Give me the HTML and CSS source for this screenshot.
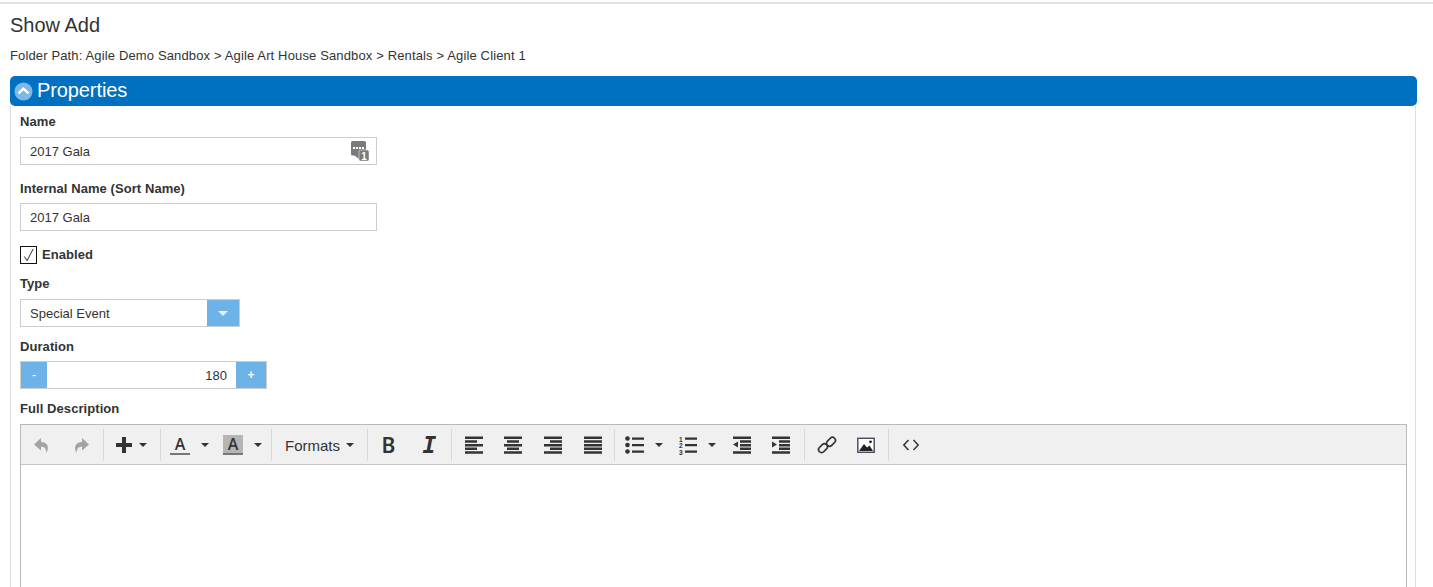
FILE: index.html
```html
<!DOCTYPE html>
<html lang="en">
<head>
<meta charset="utf-8">
<title>Show Add</title>
<link rel="stylesheet" href="styles.css">
</head>
<body>
<div class="topline"></div>
<main class="page">
  <h1 class="title">Show Add</h1>
  <p class="path">Folder Path: Agile Demo Sandbox &gt; Agile Art House Sandbox &gt; Rentals &gt; Agile Client 1</p>
  <section class="panel">
    <header class="panel-head">
      <svg class="collapse" viewBox="0 0 20 20"><circle cx="10" cy="10" r="9.5" fill="#7cb9e8"/><path d="M4.8 12 10 7l5.2 5" fill="none" stroke="#fff" stroke-width="2.6"/></svg>
      <span class="panel-title">Properties</span>
    </header>
    <div class="panel-body">
      <div class="field">
        <label class="label">Name</label>
        <div class="input input-name">
          <span>2017 Gala</span>
          <svg class="seq" viewBox="0 0 18 20"><path d="M1.500 0h12A1.500 1.500 0 0 1 15 1.500V13a1.500 1.500 0 0 1-1.500 1.500h-12A1.500 1.500 0 0 1 0 13V1.500A1.500 1.500 0 0 1 1.500 0z" fill="#7a7a7a"/><path d="M3 14h5v4z" fill="#7a7a7a"/><rect x="2" y="6" width="2" height="2" fill="#fff"/><rect x="5" y="6" width="2" height="2" fill="#fff"/><rect x="8" y="6" width="2" height="2" fill="#fff"/><rect x="11" y="6" width="2" height="2" fill="#fff"/><rect x="8" y="9" width="10" height="11" rx="1.500" fill="#7a7a7a" stroke="#fff" stroke-width=".5"/><text x="13" y="18.500" text-anchor="middle" class="seq-num">1</text></svg>
        </div>
      </div>
      <div class="field field-internal">
        <label class="label">Internal Name (Sort Name)</label>
        <div class="input input-name"><span>2017 Gala</span></div>
      </div>
      <div class="check-row">
        <span class="checkbox"><svg viewBox="0 0 16 16"><path d="M3.500 9.500 6.500 14 13 1.500" fill="none" stroke="#222" stroke-width="1"/></svg></span>
        <label class="label">Enabled</label>
      </div>
      <div class="field field-type">
        <label class="label">Type</label>
        <div class="input input-select">
          <span>Special Event</span>
          <span class="select-btn"><i class="select-caret"></i></span>
        </div>
      </div>
      <div class="field field-duration">
        <label class="label">Duration</label>
        <div class="input input-spin">
          <span class="spin-btn spin-minus">-</span>
          <span class="spin-val">180</span>
          <span class="spin-btn spin-plus">+</span>
        </div>
      </div>
      <div class="field field-desc">
        <label class="label">Full Description</label>
        <div class="editor">
          <div class="toolbar">
            <div class="group group-history">
              <span class="btn"><svg class="ico" viewBox="0 0 20 20"><path d="M9 3 2 9.500 9 15.500v-3.700c3.500 0 5 1.500 5.600 6.200C17.500 12 15.500 7 9 7z" fill="#a3a3a3"/></svg></span>
              <span class="btn"><svg class="ico" viewBox="0 0 20 20"><path d="M11 3l7 6.500-7 6v-3.700c-3.500 0-5 1.500-5.600 6.200C2.500 12 4.500 7 11 7z" fill="#a3a3a3"/></svg></span>
            </div>
            <div class="group group-insert">
              <span class="split"><svg class="ico ico-plus" viewBox="0 0 16 16"><path d="M6 0h4v6h6v4h-6v6H6v-6H0V6h6z" fill="#333"/></svg><i class="caret"></i></span>
            </div>
            <div class="group group-color">
              <span class="split split-color"><span class="font-a">A</span><i class="caret"></i></span>
              <span class="split split-color"><span class="font-a font-a-bg">A</span><i class="caret"></i></span>
            </div>
            <div class="group group-formats">
              <span class="formats">Formats</span><i class="caret"></i>
            </div>
            <div class="group group-style">
              <span class="btn"><span class="glyph-b">B</span></span>
              <span class="btn"><span class="glyph-i">I</span></span>
            </div>
            <div class="group group-align">
              <span class="btn"><svg class="ico" viewBox="0 0 20 20"><path d="M1 1.500h18V4H1zM1 5.200h12v2.500H1zM1 8.900h18v2.500H1zM1 12.600h12v2.500H1zM1 16.300h18v2.500H1z" fill="#333"/></svg></span>
              <span class="btn"><svg class="ico" viewBox="0 0 20 20"><path d="M1 1.500h18V4H1zM4 5.200h12v2.500H4zM1 8.900h18v2.500H1zM4 12.600h12v2.500H4zM1 16.300h18v2.500H1z" fill="#333"/></svg></span>
              <span class="btn"><svg class="ico" viewBox="0 0 20 20"><path d="M1 1.500h18V4H1zM7 5.200h12v2.500H7zM1 8.900h18v2.500H1zM7 12.600h12v2.500H7zM1 16.300h18v2.500H1z" fill="#333"/></svg></span>
              <span class="btn"><svg class="ico" viewBox="0 0 20 20"><path d="M1 1.500h18V4H1zM1 5.200h18v2.500H1zM1 8.900h18v2.500H1zM1 12.600h18v2.500H1zM1 16.300h18v2.500H1z" fill="#333"/></svg></span>
            </div>
            <div class="group group-lists">
              <span class="split split-list"><svg class="ico" viewBox="0 0 20 20"><circle cx="2.500" cy="3.500" r="2.300" fill="#333"/><circle cx="2.500" cy="10" r="2.300" fill="#333"/><circle cx="2.500" cy="16.500" r="2.300" fill="#333"/><path d="M7 2.500h12v2.200H7zM7 9h12v2.200H7zM7 15.500h12v2.200H7z" fill="#333"/></svg><i class="caret"></i></span>
              <span class="split split-list split-num"><svg class="ico" viewBox="0 0 20 20"><text x="1" y="6.500" class="num">1</text><text x="1" y="13" class="num">2</text><text x="1" y="19.500" class="num">3</text><path d="M7 2.500h12v2.200H7zM7 9h12v2.200H7zM7 15.500h12v2.200H7z" fill="#333"/></svg><i class="caret"></i></span>
              <span class="btn"><svg class="ico" viewBox="0 0 20 20"><path d="M1 1.500h18V4H1zM8 5.200h11v2.500H8zM8 8.900h11v2.500H8zM8 12.600h11v2.500H8zM1 16.300h18v2.500H1zM6 6.500v6L1 9.500z" fill="#333"/></svg></span>
              <span class="btn"><svg class="ico" viewBox="0 0 20 20"><path d="M1 1.500h18V4H1zM8 5.200h11v2.500H8zM8 8.900h11v2.500H8zM8 12.600h11v2.500H8zM1 16.300h18v2.500H1zM1 6.500v6l5-3z" fill="#333"/></svg></span>
            </div>
            <div class="group group-insert2">
              <span class="btn"><svg class="ico" viewBox="0 0 20 20"><g fill="none" stroke="#333" stroke-width="1.700"><rect x="1" y="10.200" width="10" height="6" rx="3" transform="rotate(-45 6 13.200)"/><rect x="9" y="3.800" width="10" height="6" rx="3" transform="rotate(-45 14 6.800)"/></g></svg></span>
              <span class="btn"><svg class="ico" viewBox="0 0 20 20"><rect x="1.800" y="3.300" width="16.400" height="14" fill="#fff" stroke="#4a4560" stroke-width="1.400"/><path d="M3 16l5-7 3 3.500 2.500-2 3.500 5.500z" fill="#222"/><circle cx="14.500" cy="6.800" r="1.400" fill="#222"/></svg></span>
            </div>
            <div class="group group-code">
              <span class="btn"><svg class="ico" viewBox="0 0 20 20"><path d="M7.500 5 2.800 10l4.700 5M12.500 5l4.700 5-4.700 5" fill="none" stroke="#333" stroke-width="1.500"/></svg></span>
            </div>
          </div>
          <div class="editor-area"></div>
        </div>
      </div>
    </div>
  </section>
</main>
</body>
</html>
```

FILE: styles.css
```css
* { box-sizing: border-box; }
html, body { margin: 0; height: 587px; overflow: hidden; background: #fff; }
body { font-family: "Liberation Sans", Arial, sans-serif; color: #333; font-size: 13px; }
.topline { height: 2px; margin-top: 2px; background: #e4e4e4; }
.page { height: 583px; overflow: hidden; padding: 0 16px 0 10px; }
.title { margin: 0; padding-top: 9px; font-size: 20px; line-height: 24px; font-weight: 400; color: #333; }
.path { margin: 11px 0 0; font-size: 13px; letter-spacing: .14px; line-height: 16px; }
.panel { margin-top: 12px; }
.panel-head { display: flex; align-items: center; gap: 4px; height: 30px; padding-left: 4px; background: #0070c0; color: #fff; border-radius: 5px; font-size: 20px; letter-spacing: -.1px; }
.panel-title { padding-bottom: 2px; }
.collapse { width: 19px; height: 19px; flex: none; }
.panel-body { padding: 8px 0 0 9px; margin-right: 1px; border-left: 1px solid #ddd; border-right: 1px solid #ddd; }
.label { display: block; font-weight: 700; font-size: 13px; letter-spacing: .07px; line-height: 16px; color: #333; }
.field .label { margin-bottom: 7px; }
.field-internal { margin-top: 16px; }
.field-internal .label { margin-bottom: 6px; }
.field-type { margin-top: 12px; }
.field-duration { margin-top: 12px; }
.field-duration .label { margin-bottom: 6px; }
.field-desc { margin-top: 12px; }
.input { display: flex; align-items: center; height: 28px; border: 1px solid #ccc; background: #fff; font-size: 13px; }
.input-name { width: 357px; padding: 0 9px; justify-content: space-between; }
.seq { width: 18px; height: 20px; margin-right: -2px; }
.seq-num { font: 700 10px "Liberation Sans", sans-serif; fill: #fff; }
.check-row { display: flex; align-items: center; gap: 5px; margin-top: 15px; height: 18px; }
.checkbox { display: block; width: 17px; height: 18px; border: 1px solid #111; background: #fff; }
.checkbox svg { display: block; width: 15px; height: 16px; }
.input-select { width: 220px; padding-left: 9px; justify-content: space-between; }
.select-btn { display: flex; align-items: center; justify-content: center; width: 32px; height: 26px; background: #6db3e8; }
.select-caret { width: 0; height: 0; border-left: 5px solid transparent; border-right: 5px solid transparent; border-top: 5px solid #e8f3fb; }
.input-spin { width: 247px; }
.spin-btn { display: flex; align-items: center; justify-content: center; height: 26px; background: #6db3e8; color: #fff; font-size: 12px; }
.spin-minus { width: 26px; }
.spin-plus { width: 30px; font-weight: 700; }
.spin-val { flex: 1; text-align: right; padding-right: 9px; }
.editor { width: 1387px; height: 300px; border: 1px solid #b9b9b9; }
.toolbar { display: flex; height: 40px; background: #f0f0f0; border-bottom: 1px solid #c5c5c5; }
.group { display: flex; align-items: center; height: 32px; margin-top: 4px; border-right: 1px solid #d9d9d9; flex: none; }
.group-history { width: 83px; }
.group-history .btn:last-child { width: 38px; }
.group-insert { width: 57px; padding-left: 12px; }
.group-color { width: 111px; padding-left: 9px; }
.group-formats { width: 96px; padding-left: 13px; gap: 6px; }
.group-style { width: 84px; }
.group-align { width: 163px; padding-left: 2px; }
.group-lists { width: 190px; padding-left: 10px; }
.group-insert2 { width: 84px; padding-left: 2px; }
.group-insert2 .btn { width: 39px; }
.group-code { width: 40px; border-right: 0; padding-left: 4px; }
.btn { display: flex; align-items: center; justify-content: center; width: 41px; height: 32px; }
.group-align .btn, .group-lists .btn { width: 39.600px; }
.split { display: flex; align-items: center; gap: 7px; height: 32px; }
.split-color { width: 53px; gap: 11px; }
.split-color:last-child { width: 48px; }
.split-list { width: 53px; gap: 10px; }
.split-num { width: 44px; }
.ico { display: block; width: 20px; height: 20px; flex: none; }
.ico-plus { width: 16px; height: 16px; }
.num { font: 700 6.500px "Liberation Sans", sans-serif; fill: #333; }
.caret { display: block; width: 0; height: 0; flex: none; border-left: 4px solid transparent; border-right: 4px solid transparent; border-top: 4px solid #333; }
.font-a { display: block; width: 20px; height: 20px; text-align: center; font-weight: 600; font-size: 16px; line-height: 19px; color: #333; border-bottom: 2px solid #777; font-family: "Open Sans", sans-serif; }
.font-a-bg { background: #b5b5b5; }
.formats { font-size: 15px; line-height: 20px; padding-top: 2px; color: #333; }
.glyph-b { font: 600 21px/20px "Noto Sans", sans-serif; color: #333; }
.glyph-i { font: italic 700 23px/20px "DejaVu Sans Mono", monospace; color: #333; }
.editor-area { height: 260px; background: #fff; }
```
